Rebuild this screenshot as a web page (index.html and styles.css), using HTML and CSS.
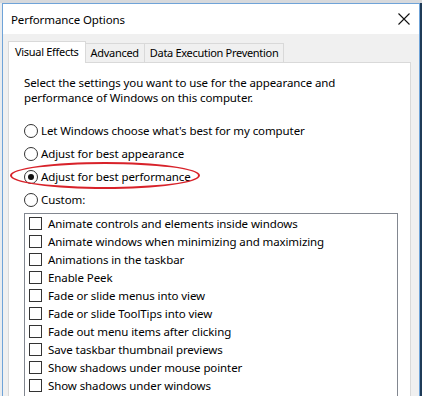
FILE: index.html
```html
<!DOCTYPE html>
<html>
<head>
    <meta charset="UTF-8">
    <title>Performance Options</title>
    <link rel="stylesheet" href="styles.css">
</head>
<body>
    <div class="backdrop"></div>
    <div class="dialog">
        <div class="title-bar">
            <span class="title">Performance Options</span>
            <svg class="close" width="12" height="12" viewBox="0 0 12 12">
                <path d="M0.5 0.5 L11.5 11.5 M11.5 0.5 L0.5 11.5" stroke="#111" stroke-width="1.1" fill="none"/>
            </svg>
        </div>
        <div class="dialog-body">
            <div class="tabs">
                <div class="tab active">Visual Effects</div>
                <div class="tab">Advanced</div>
                <div class="tab">Data Execution Prevention</div>
            </div>
            <div class="panel">
                <p class="intro">Select the settings you want to use for the appearance and performance of Windows on this computer.</p>
                <div class="options">
                    <label class="option"><span class="radio"></span>Let Windows choose what's best for my computer</label>
                    <label class="option"><span class="radio"></span>Adjust for best appearance</label>
                    <label class="option marked"><span class="radio checked"></span>Adjust for best performance</label>
                    <label class="option"><span class="radio"></span>Custom:</label>
                </div>
                <div class="listbox">
                    <div class="item"><span class="check"></span>Animate controls and elements inside windows</div>
                    <div class="item"><span class="check"></span>Animate windows when minimizing and maximizing</div>
                    <div class="item"><span class="check"></span>Animations in the taskbar</div>
                    <div class="item"><span class="check"></span>Enable Peek</div>
                    <div class="item"><span class="check"></span>Fade or slide menus into view</div>
                    <div class="item"><span class="check"></span>Fade or slide ToolTips into view</div>
                    <div class="item"><span class="check"></span>Fade out menu items after clicking</div>
                    <div class="item"><span class="check"></span>Save taskbar thumbnail previews</div>
                    <div class="item"><span class="check"></span>Show shadows under mouse pointer</div>
                    <div class="item"><span class="check"></span>Show shadows under windows</div>
                </div>
            </div>
        </div>
    </div>
</body>
</html>
```

FILE: styles.css
```css
html, body {
    margin: 0;
    padding: 0;
    height: 396px;
    overflow: hidden;
}
body {
    font-family: "Noto Sans", "Open Sans", sans-serif;
    font-size: 11.5px;
    color: #000;
    background: linear-gradient(to right, #e9ecef 0, #e9ecef 419px, #1f3b57 419px);
}
.backdrop {
    height: 3px;
    background-color: #d7d9dc;
}
.dialog {
    width: 416px;
    margin-left: 2px;
    border: 1px solid #6fa3d8;
    border-bottom: none;
    background-color: #f0f0f0;
    height: 393px;
    overflow: hidden;
}
.title-bar {
    height: 30px;
    background-color: #fff;
    display: flex;
    align-items: center;
    justify-content: space-between;
    padding: 0 9px 0 8px;
}
.title {
    font-size: 11.5px;
    letter-spacing: -0.1px;
}
.close {
    margin-top: -1px;
}
.dialog-body {
    padding: 7px 8px 0 5px;
}
.tabs {
    display: flex;
    align-items: flex-end;
    height: 21px;
    position: relative;
    z-index: 1;
}
.tab {
    height: 19px;
    line-height: 18px;
    padding: 0 5px;
    border: 1px solid #d9d9d9;
    border-bottom: none;
    margin-left: -1px;
    background-color: #f0f0f0;
    font-size: 11px;
    letter-spacing: -0.3px;
    box-sizing: border-box;
}
.tab.active {
    height: 22px;
    line-height: 20px;
    margin-left: 0;
    background-color: #fff;
    padding: 0 6px 0 6px;
    margin-bottom: -1px;
}
.panel {
    background-color: #fff;
    border: 1px solid #d9d9d9;
    height: 340px;
    padding: 12px 0 0 15px;
}
.intro {
    margin: 0;
    width: 330px;
    line-height: 15px;
    letter-spacing: -0.1px;
}
.options {
    margin-top: 14px;
    display: flex;
    flex-direction: column;
}
.option {
    position: relative;
    display: flex;
    align-items: center;
    height: 23px;
    letter-spacing: -0.1px;
}
.radio {
    width: 12px;
    height: 12px;
    border: 1px solid #333;
    border-radius: 50%;
    margin-right: 3px;
    display: flex;
    align-items: center;
    justify-content: center;
    background-color: #fff;
}
.radio.checked::after {
    content: "";
    width: 6px;
    height: 6px;
    border-radius: 50%;
    background-color: #111;
}
.option.marked::before {
    content: "";
    position: absolute;
    left: -14px;
    top: -3px;
    width: 190px;
    height: 27px;
    box-sizing: border-box;
    border: 2px solid #d8222a;
    border-radius: 50%;
}
.listbox {
    margin-top: 2px;
    width: 372px;
    border: 1px solid #828790;
    height: 200px;
}
.item {
    display: flex;
    align-items: center;
    height: 18px;
    padding-left: 4px;
    letter-spacing: -0.1px;
}
.check {
    width: 11px;
    height: 11px;
    border: 1px solid #333;
    margin-right: 6px;
}
```
